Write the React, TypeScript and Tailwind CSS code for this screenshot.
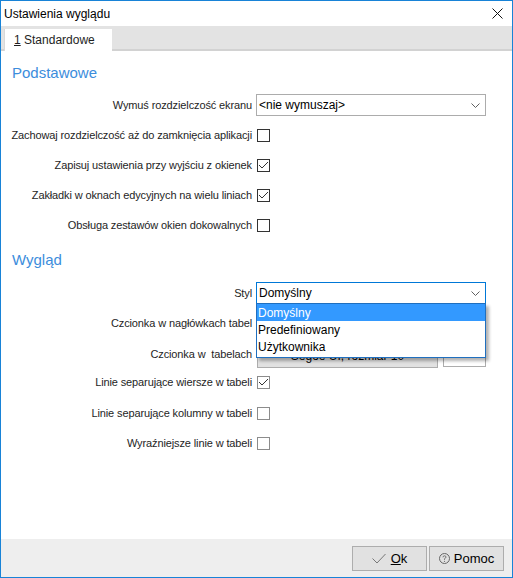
import React from 'react';

const ui = "font-['Liberation_Sans',Arial,sans-serif]";

function Checkbox({ checked, light }: { checked?: boolean; light?: boolean }) {
  return (
    <div
      className={`w-[13px] h-[13px] border bg-white flex items-center justify-center ${
        light ? 'border-[#8c8c8c]' : 'border-[#333333]'
      }`}
    >
      {checked && (
        <svg width="11" height="11" viewBox="0 0 11 11">
          <polyline points="1,5 4,8 10,2" fill="none" stroke="#333333" strokeWidth="1" />
        </svg>
      )}
    </div>
  );
}

function Chevron() {
  return (
    <svg width="9" height="5" viewBox="0 0 9 5">
      <polyline points="0.5,0.5 4.5,4.5 8.5,0.5" fill="none" stroke="#606060" strokeWidth="1" />
    </svg>
  );
}

function Select({ value, focused }: { value: string; focused?: boolean }) {
  return (
    <div
      className={`w-[230px] h-[22px] border bg-white flex items-center pl-[2px] pr-[5px] ${
        focused ? 'border-[#0078d7]' : 'border-[#acacac]'
      }`}
    >
      <span className={`flex-1 text-[12px] text-black ${ui}`}>{value}</span>
      <Chevron />
    </div>
  );
}

function Row({ label, h, children }: { label: string; h: string; children: React.ReactNode }) {
  return (
    <div className={`flex items-center ${h}`}>
      <div className={`w-[251px] text-right text-[11px] tracking-[-0.12px] text-[#1e1e1e] whitespace-pre ${ui}`}>
        {label}
      </div>
      <div className="ml-[4px] flex items-center">{children}</div>
    </div>
  );
}

function FontPicker({ text }: { text?: string }) {
  return (
    <div className="flex items-center">
      <div
        className={`w-[181px] h-[27px] pt-[4px] border border-[#adadad] bg-[#e1e1e1] flex items-center justify-center text-[12px] text-black ${ui}`}
      >
        {text}
      </div>
      <div className="ml-[5px] w-[43px] h-[25px] border border-[#adadad] bg-white" />
    </div>
  );
}

const styles = ['Domyślny', 'Predefiniowany', 'Użytkownika'];

export default function App() {
  return (
    <div className={`w-[513px] h-[578px] border border-[#1883d7] bg-white flex flex-col ${ui}`}>
      {/* title bar */}
      <div className="h-[25px] flex items-center pl-[3px] pr-[9px]">
        <span className="flex-1 text-[12px] text-black">Ustawienia wyglądu</span>
        <svg width="11" height="11" viewBox="0 0 11 11">
          <path d="M0.5 0.5 L10.5 10.5 M10.5 0.5 L0.5 10.5" stroke="#111" strokeWidth="1" />
        </svg>
      </div>

      {/* tabs */}
      <div className="h-[25px] bg-[#e3e3e3] border-b-2 border-[#d2d2d2] flex items-end pl-[3px]">
        <div className="w-[108px] h-[22px] -mb-[2px] bg-white border-l border-[#d9d9d9] flex items-center pl-[9px] text-[12px] text-[#1e1e1e]">
          <span className="underline">1</span>
          <span>&nbsp;Standardowe</span>
        </div>
      </div>

      {/* content */}
      <div className="flex-1 flex flex-col">
        <div className="mt-[11px] h-[22px] flex items-center pl-[11px] text-[15px] text-[#3c8ddc]">Podstawowe</div>
        <div className="mt-[6px]">
          <Row label="Wymuś rozdzielczość ekranu" h="h-[30px]">
            <Select value="<nie wymuszaj>" />
          </Row>
          <Row label="Zachowaj rozdzielczość aż do zamknięcia aplikacji" h="h-[30px]">
            <div className="ml-[1px]"><Checkbox /></div>
          </Row>
          <Row label="Zapisuj ustawienia przy wyjściu z okienek" h="h-[30px]">
            <div className="ml-[1px]"><Checkbox checked /></div>
          </Row>
          <Row label="Zakładki w oknach edycyjnych na wielu liniach" h="h-[30px]">
            <div className="ml-[1px]"><Checkbox checked /></div>
          </Row>
          <Row label="Obsługa zestawów okien dokowalnych" h="h-[30px]">
            <div className="ml-[1px]"><Checkbox /></div>
          </Row>
        </div>

        <div className="mt-[9px] h-[22px] flex items-center pl-[11px] text-[15px] text-[#3c8ddc]">Wygląd</div>
        <div className="mt-[7px]">
          <Row label="Styl" h="h-[30px]">
            <div className="relative">
              <Select value="Domyślny" focused />
              <div className="absolute left-0 top-[21px] z-10 w-[230px] border border-[#1f6fbf] bg-white pb-[2px] shadow-[3px_3px_3px_rgba(0,0,0,0.3)]">
                {styles.map((s, i) => (
                  <div
                    key={s}
                    className={`h-[17px] flex items-center pl-[1px] text-[12px] ${
                      i === 0 ? 'bg-[#3399ff] text-white' : 'text-black'
                    }`}
                  >
                    {s}
                  </div>
                ))}
              </div>
            </div>
          </Row>
          <Row label="Czcionka w nagłówkach tabel" h="h-[31px]">
            <div className="ml-[1px]"><FontPicker /></div>
          </Row>
          <Row label="Czcionka w  tabelach" h="h-[30px]">
            <div className="ml-[1px]"><FontPicker text="Segoe UI, rozmiar 10" /></div>
          </Row>
          <Row label="Linie separujące wiersze w tabeli" h="h-[27px]">
            <div className="ml-[1px]"><Checkbox checked light /></div>
          </Row>
          <Row label="Linie separujące kolumny w tabeli" h="h-[34px]">
            <div className="ml-[1px]"><Checkbox light /></div>
          </Row>
          <Row label="Wyraźniejsze linie w tabeli" h="h-[26px]">
            <div className="ml-[1px]"><Checkbox light /></div>
          </Row>
        </div>
      </div>

      {/* footer */}
      <div className="h-[38px] bg-[#eeeeee] flex items-start justify-end gap-[2px] pt-[7px] pr-[8px]">
        <button className="w-[75px] h-[25px] border border-[#adadad] bg-[#e1e1e1] flex items-center justify-center gap-[5px] text-[13px] text-black">
          <svg width="14" height="11" viewBox="0 0 14 11">
            <polyline points="0.5,5.5 5,10 13.5,1" fill="none" stroke="#777" strokeWidth="1" />
          </svg>
          <span>
            <span className="underline">O</span>k
          </span>
        </button>
        <button className="w-[75px] h-[25px] border border-[#adadad] bg-[#e1e1e1] flex items-center justify-center gap-[4px] text-[13px] text-black">
          <svg width="11" height="11" viewBox="0 0 11 11">
            <circle cx="5.5" cy="5.5" r="5" fill="none" stroke="#666" strokeWidth="1" />
            <path d="M4 4.3 Q4 2.8 5.5 2.8 Q7 2.8 7 4.1 Q7 5 5.5 5.7 L5.5 6.8" fill="none" stroke="#666" strokeWidth="0.9" />
            <circle cx="5.5" cy="8.3" r="0.6" fill="#666" />
          </svg>
          <span>Pomoc</span>
        </button>
      </div>
    </div>
  );
}
